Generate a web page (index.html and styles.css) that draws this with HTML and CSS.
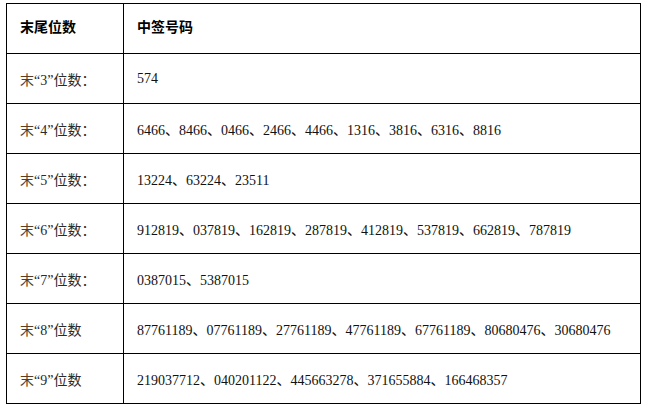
FILE: index.html
```html
<!DOCTYPE html>
<html lang="zh-CN">
<head>
<meta charset="utf-8">
<link rel="stylesheet" href="styles.css">
</head>
<body>
<table class="lottery">
  <thead>
    <tr><th class="c1">末尾位数</th><th class="c2">中签号码</th></tr>
  </thead>
  <tbody>
    <tr><td class="c1"><span class="mo">末</span>“3”位数：</td><td class="c2">574</td></tr>
    <tr><td class="c1"><span class="mo">末</span>“4”位数：</td><td class="c2">6466、8466、0466、2466、4466、1316、3816、6316、8816</td></tr>
    <tr><td class="c1"><span class="mo">末</span>“5”位数：</td><td class="c2">13224、63224、23511</td></tr>
    <tr><td class="c1"><span class="mo">末</span>“6”位数：</td><td class="c2">912819、037819、162819、287819、412819、537819、662819、787819</td></tr>
    <tr><td class="c1"><span class="mo">末</span>“7”位数：</td><td class="c2">0387015、5387015</td></tr>
    <tr><td class="c1"><span class="mo">末</span>“8”位数</td><td class="c2">87761189、07761189、27761189、47761189、67761189、80680476、30680476</td></tr>
    <tr><td class="c1"><span class="mo">末</span>“9”位数</td><td class="c2">219037712、040201122、445663278、371655884、166468357</td></tr>
  </tbody>
</table>
</body>
</html>
```
FILE: styles.css
```css
html, body {
  margin: 0;
  padding: 0;
  background: #fff;
}
body {
  padding: 3px 0 0 6px;
}
.lottery {
  border-collapse: collapse;
  width: 635px;
  table-layout: fixed;
  font-family: "Liberation Serif", "Noto Sans CJK SC", serif;
  font-size: 14px;
  color: #111;
}
.lottery tr {
  height: 50px;
}
.lottery th,
.lottery td {
  border: 1px solid #000;
  padding: 0 0 0 13px;
  text-align: left;
  vertical-align: middle;
  box-sizing: border-box;
}
.lottery td {
  padding-top: 1px;
}
.lottery th {
  font-family: "Noto Sans CJK SC", sans-serif;
  font-weight: bold;
  font-size: 14px;
  color: #000;
  padding-bottom: 5px;
}
.lottery .c1 {
  width: 117px;
}
.lottery td.c1 {
  color: #2a2a2a;
}
.mo {
  color: #5a3d22;
}
```
